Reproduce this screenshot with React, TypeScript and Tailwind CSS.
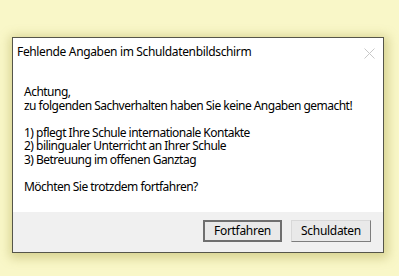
export default function App() {
  const font = { fontFamily: '"Noto Sans", "Open Sans", sans-serif' };
  return (
    <div
      className="w-[399px] h-[276px] bg-[#f9f7c8] pt-[37px] pl-[12px] overflow-hidden"
      style={font}
    >
      <div className="w-[372px] h-[216px] border border-[#55554a] bg-white flex flex-col shadow-[1px_2px_10px_3px_rgba(150,140,40,0.35)]">
        <div className="flex items-center justify-between pl-[4px] pr-[8px] pt-[4px] h-[24px]">
          <span className="text-[12px] text-black tracking-[-0.35px]">
            Fehlende Angaben im Schuldatenbildschirm
          </span>
          <svg width="11" height="11" viewBox="0 0 11 11" className="mt-[2px]">
            <path d="M0.5 0.5 L10.5 10.5 M10.5 0.5 L0.5 10.5" stroke="#c8c8c8" strokeWidth="1" />
          </svg>
        </div>
        <div className="flex-1 pl-[11px] pt-[23px] text-[12px] leading-[13.5px] text-black tracking-[-0.52px]">
          <p>Achtung,</p>
          <p>zu folgenden Sachverhalten haben Sie keine Angaben gemacht!</p>
          <p>&nbsp;</p>
          <p>1) pflegt Ihre Schule internationale Kontakte</p>
          <p>2) bilingualer Unterricht an Ihrer Schule</p>
          <p>3) Betreuung im offenen Ganztag</p>
          <p>&nbsp;</p>
          <p>Möchten Sie trotzdem fortfahren?</p>
        </div>
        <div className="h-[40px] bg-[#f0f0f0] flex items-start justify-end gap-[9px] pt-[8px] pr-[12px]">
          <button className="w-[79px] h-[22px] border-2 border-[#6f6f6f] bg-[#e9e9e9] text-[12px] text-black tracking-[-0.3px] flex items-center justify-center">
            Fortfahren
          </button>
          <button className="w-[80px] h-[22px] border border-t-[#d8d8d8] border-l-[#d8d8d8] border-r-[#7d7d7d] border-b-[#7d7d7d] bg-[#e9e9e9] text-[12px] text-black tracking-[-0.3px] flex items-center justify-center">
            Schuldaten
          </button>
        </div>
      </div>
    </div>
  );
}
